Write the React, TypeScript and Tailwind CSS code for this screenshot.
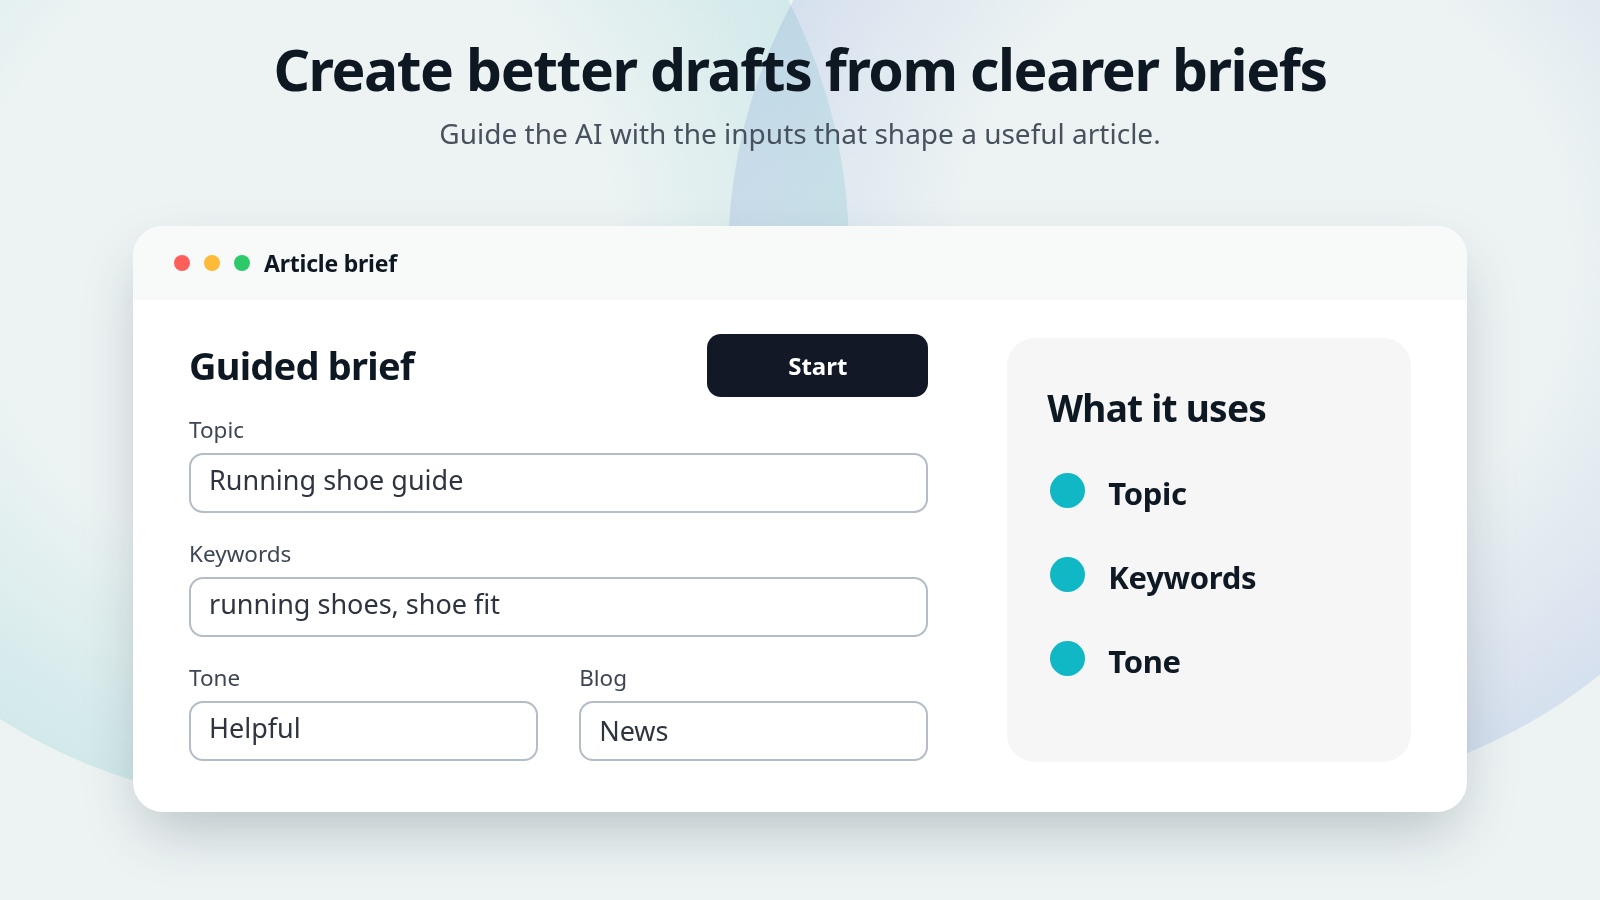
import React from "react";

const font = { fontFamily: '"Noto Sans", "Open Sans", sans-serif' };

function Field({ label, value, lift = true }: { label: string; value: string; lift?: boolean }) {
  return (
    <div className="flex flex-col">
      <span className="mb-[8px] h-[30px] text-[22.5px] leading-[30px] text-[#3d4652]">{label}</span>
      <div
        className={
          "flex h-[60px] items-center rounded-[14px] border-2 border-[#b4bdc7] bg-white pl-[18px] text-[27px] text-[#2e3540] " +
          (lift ? "pb-[6px]" : "")
        }
      >
        {value}
      </div>
    </div>
  );
}

function UseItem({ label }: { label: string }) {
  return (
    <li className="flex h-[42px] items-center gap-[23px]">
      <span className="h-[35px] w-[35px] shrink-0 rounded-full bg-[#10b8c6]" />
      <span className="pt-[6px] text-[31px] font-bold leading-[42px] tracking-[-0.01em] text-[#0f1924]">{label}</span>
    </li>
  );
}

export default function App() {
  return (
    <div className="relative min-h-screen w-full overflow-hidden bg-[#edf3f3]" style={font}>
      {/* soft background blobs */}
      <div className="pointer-events-none absolute left-[-257px] top-[-301px] h-[1106px] w-[1106px] rounded-full bg-[radial-gradient(circle,rgba(214,240,240,0)_40%,rgba(188,232,234,0.85)_100%)] mix-blend-multiply" />
      <div className="pointer-events-none absolute left-[728px] top-[-279px] h-[1072px] w-[1072px] rounded-full bg-[radial-gradient(circle,rgba(220,226,242,0)_40%,rgba(198,210,244,0.85)_100%)] mix-blend-multiply" />

      <div className="relative flex flex-col items-center pt-[36px]">
        <h1 className="text-[57px] font-bold leading-[67px] tracking-[-0.025em] text-[#0e1823]">
          Create better drafts from clearer briefs
        </h1>
        <p className="mt-[12px] text-[28px] leading-[36px] text-[#48525e]">
          Guide the AI with the inputs that shape a useful article.
        </p>

        <div className="mt-[75px] w-[1334px] overflow-hidden rounded-[30px] bg-white shadow-[0_26px_60px_-12px_rgba(30,50,70,0.28)]">
          <div className="flex h-[74px] items-center bg-[#f8fafa] pl-[41px]">
            <div className="flex items-center gap-[14px]">
              <span className="h-[16px] w-[16px] rounded-full bg-[#ff5f5a]" />
              <span className="h-[16px] w-[16px] rounded-full bg-[#ffba38]" />
              <span className="h-[16px] w-[16px] rounded-full bg-[#2dca6a]" />
            </div>
            <span className="ml-[14px] text-[23px] font-bold tracking-[-0.01em] text-[#0e1823]">Article brief</span>
          </div>

          <div className="flex gap-[79px] px-[56px] pb-[50px] pt-[34px]">
            <div className="w-[740px]">
              <div className="flex items-center justify-between">
                <h2 className="text-[38px] font-bold tracking-[-0.02em] text-[#0e1823]">Guided brief</h2>
                <button className="h-[63px] w-[221px] rounded-[14px] bg-[#131826] text-[24px] font-bold text-white">
                  Start
                </button>
              </div>
              <div className="mt-[18px] flex flex-col gap-[26px]">
                <Field label="Topic" value="Running shoe guide" />
                <Field label="Keywords" value="running shoes, shoe fit" />
                <div className="grid grid-cols-2 gap-[41px]">
                  <Field label="Tone" value="Helpful" />
                  <Field label="Blog" value="News" lift={false} />
                </div>
              </div>
            </div>

            <div className="mt-[4px] h-[424px] w-[404px] rounded-[28px] bg-[#f6f6f7] pl-[43px] pr-[40px] pt-[46px]">
              <h3 className="-ml-[3px] text-[37px] font-bold leading-[48px] tracking-[-0.02em] text-[#0e1823]">What it uses</h3>
              <ul className="mt-[37px] flex flex-col gap-[42px]">
                <UseItem label="Topic" />
                <UseItem label="Keywords" />
                <UseItem label="Tone" />
              </ul>
            </div>
          </div>
        </div>
      </div>
    </div>
  );
}
